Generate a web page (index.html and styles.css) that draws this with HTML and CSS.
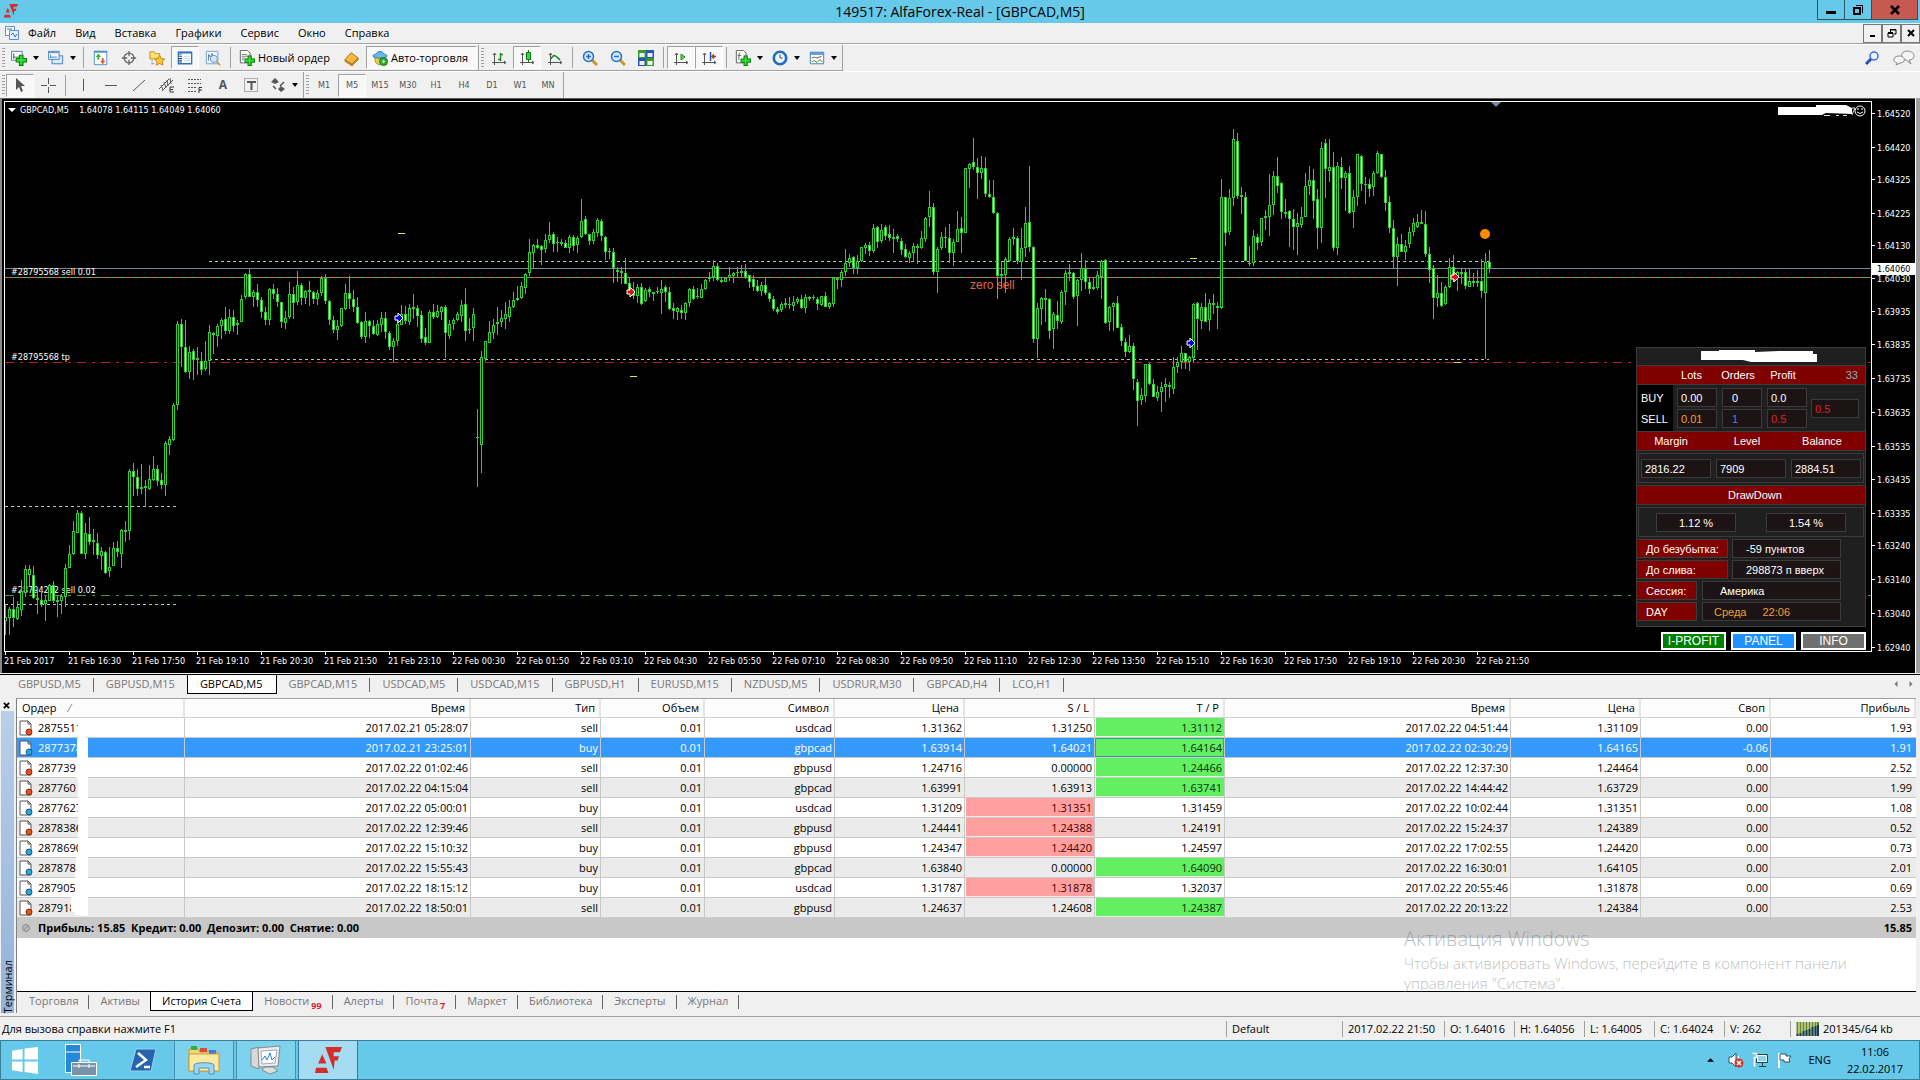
FILE: index.html
```
<!DOCTYPE html>
<html lang="ru">
<head>
    <meta charset="UTF-8">
    <meta name="viewport" content="width=device-width, initial-scale=1.0">
    <title>149517: AlfaForex-Real - [GBPCAD,M5]</title>
    <link rel="stylesheet" href="styles.css">
</head>
<body>
    <!-- Shared icons -->
    <svg class="defs" aria-hidden="true">
        <symbol id="logo" viewBox="0 0 26 26"><path fill="#d42d2a" d="M10 0h16l-2 5h-6v4h5l-1 4h-3l-1 9zM7 7l4 9H3zM1 20h10l2 5H0z"/></symbol>
        <symbol id="sheet" viewBox="0 0 14 16"><path d="M1 1h8l3 3v11H1z" fill="#fff" stroke="#555"/><path d="M9 1v3h3" fill="none" stroke="#555"/></symbol>
        <symbol id="order-sell" viewBox="0 0 14 16"><use href="#sheet"/><circle cx="10" cy="12" r="3" fill="#e4501c" stroke="#8e2c0c"/></symbol>
        <symbol id="order-buy" viewBox="0 0 14 16"><use href="#sheet"/><circle cx="10" cy="12" r="3" fill="#2ba3e0" stroke="#13608c"/></symbol>
        <symbol id="plus" viewBox="0 0 10 10"><path d="M3.500.5h3v3h3v3h-3v3h-3v-3h-3v-3h3z" fill="#2ee02e" stroke="#0a7a0a"/></symbol>
        <symbol id="axes" viewBox="0 0 16 16"><path d="M3.500 15V3M1 12.500h14M2 5l1.500-2L5 5M13 11l2 1.500-2 1.500" fill="none" stroke="#555"/></symbol>
        <symbol id="lens" viewBox="0 0 16 16"><path d="M10 10l5 5" stroke="#c79a2a" stroke-width="3"/><circle cx="6.500" cy="6.500" r="5" fill="#cfeaff" stroke="#2a6fc0" stroke-width="1.500"/></symbol>
    </svg>

    <header class="title-bar">
        <svg class="app-icon"><use href="#logo"/></svg>
        <h1>149517: AlfaForex-Real - [GBPCAD,M5]</h1>
        <div class="window-buttons">
            <button aria-label="Свернуть"><svg viewBox="0 0 12 12"><path d="M1 7h10v3H1z"/></svg></button>
            <button aria-label="Восстановить"><svg viewBox="0 0 12 12"><path d="M2 4h6v6H2z" fill="none" stroke="#000" stroke-width="2"/><path d="M4 1.500h6.500V9" fill="none" stroke="#000"/></svg></button>
            <button class="close" aria-label="Закрыть"><svg viewBox="0 0 12 12"><path d="M2 2l8 8M10 2l-8 8" stroke="#000" stroke-width="2.500"/></svg></button>
        </div>
    </header>

    <nav class="menu-bar">
        <svg class="menu-icon" viewBox="0 0 14 14"><path d="M.5.500h9v9h-9z" fill="#fff" stroke="#5b8ed0"/><path d="M4.500 4.500h9v9h-9z" fill="#e4efff" stroke="#5b8ed0"/><path d="M6 9l2-2 2 4 2-3M2 3h5" fill="none" stroke="#3a6fb8"/></svg>
        <a href="#">Файл</a>
        <a href="#">Вид</a>
        <a href="#">Вставка</a>
        <a href="#">Графики</a>
        <a href="#">Сервис</a>
        <a href="#">Окно</a>
        <a href="#">Справка</a>
        <div class="child-buttons">
            <button aria-label="Свернуть график"><svg viewBox="0 0 10 10"><path d="M2 7h5v2H2z"/></svg></button>
            <button aria-label="Восстановить график"><svg viewBox="0 0 10 10"><path d="M1 5h5v4H1zM3.500 4V1.500H9V6H7" fill="none" stroke="#000"/><path d="M1 4h5v2H1zM3 1h6v1.500H3z"/></svg></button>
            <button aria-label="Закрыть график"><svg viewBox="0 0 10 10"><path d="M2 2l6 6M8 2L2 8" stroke="#000" stroke-width="2"/></svg></button>
        </div>
    </nav>

    <div class="toolbar-row">
        <div class="toolbar">
            <i class="grip"></i>
            <button class="tool drop" aria-label="Новый график"><svg viewBox="0 0 18 18"><path d="M.5 1.500h12v10H.5z" fill="#fff" stroke="#3c78b4"/><path d="M3 4v6M2 8h8M3 4l1 1" stroke="#555" fill="none"/><use href="#plus" x="5" y="5" width="13" height="13"/></svg></button>
            <button class="tool drop" aria-label="Профили"><svg viewBox="0 0 18 18"><path d="M4.500 6.500h12v9h-12z" fill="#dbe9f8" stroke="#3c78b4"/><path d="M.5 1.500h12v9H.5z" fill="#f4f9ff" stroke="#3c78b4"/><path d="M1 3h11M3 5v4M2 8h8" stroke="#3c78b4"/></svg></button>
            <i class="sep"></i>
            <button class="tool" aria-label="Обзор рынка"><svg viewBox="0 0 18 18"><path d="M1.500 1.500h14v15h-14z" fill="#fff" stroke="#4a8ac8"/><path d="M1 2h15" stroke="#4a8ac8" stroke-width="2"/><path d="M3 8l3-4 3 4H7v3H5V8z" fill="#35b835"/><path d="M8 12l3 4 3-4h-2V9h-2v3z" fill="#e8592a"/></svg></button>
            <button class="tool" aria-label="Окно данных"><svg viewBox="0 0 18 18"><circle cx="9" cy="9" r="5.500" fill="none" stroke="#666" stroke-width="1.500"/><path d="M9 1v6M9 11v6M1 9h6M11 9h6" stroke="#666" stroke-width="1.500"/></svg></button>
            <button class="tool" aria-label="Навигатор"><svg viewBox="0 0 18 18"><path d="M1 2h5l1 2h5v6H1z" fill="#ffe06a" stroke="#b8902a"/><path d="M3.500 11v5M3 15.500h4" stroke="#666" stroke-dasharray="1 1"/><path d="M12 6l1.800 3.600 4 .6-2.900 2.800.7 4-3.600-1.900L8.400 17l.7-4-2.900-2.800 4-.6z" fill="#ffc830" stroke="#b8801a"/></svg></button>
            <button class="tool pressed" aria-label="Терминал"><svg viewBox="0 0 18 18"><path d="M1.500 2.500h15v13h-15z" fill="#fff" stroke="#2f74b8" stroke-width="1.500"/><path d="M2 3h14" stroke="#2f74b8" stroke-width="2"/><path d="M4 5v10" stroke="#234" stroke-width="3" stroke-dasharray="1 1"/><path d="M8 7h7M8 9.500h7M8 12h7" stroke="#b8d4ee"/></svg></button>
            <button class="tool" aria-label="Тестер стратегий"><svg viewBox="0 0 18 18"><path d="M1.500 1.500h13v14h-13z" fill="#edf5fd" stroke="#6a9cc8"/><path d="M4 12V5l2 3 2-4 2 5" fill="none" stroke="#55738c"/><circle cx="10" cy="10" r="4" fill="#cfe8ff" stroke="#5c8fc0"/><path d="M13 13l4 4" stroke="#d0a030" stroke-width="2"/></svg></button>
            <i class="sep"></i>
            <button class="tool text"><svg viewBox="0 0 18 18"><path d="M1.500.5h8l3 3v11h-11z" fill="#fff" stroke="#555"/><path d="M3 5h6M3 7h7M3 9h4M3 11h3" stroke="#777"/><use href="#plus" x="6" y="6" width="12" height="12"/></svg>Новый ордер</button>
            <button class="tool" aria-label="MetaEditor"><svg viewBox="0 0 18 18"><path d="M1 11l7-8 8 6-7 7z" fill="#f2bb3c" stroke="#9a6a12"/><path d="M1 11l8 5v2l-8-5zM9 16l7-7v2l-7 7z" fill="#c98a1c" stroke="#9a6a12" stroke-width=".5"/></svg></button>
            <button class="tool text pressed"><svg viewBox="0 0 18 18"><path d="M3 8h11l-1 6-5 3-4-3z" fill="#f0cb4a" stroke="#a8842a"/><path d="M1 7c0-2 3-2 4-3 1-3 7-3 8 0 1 1 4 1 4 3-4 3-12 3-16 0z" fill="#6bb5e8" stroke="#2d78ae"/><circle cx="13" cy="13" r="4.500" fill="#2fae2f" stroke="#147014"/><path d="M12 11v4l3-2z" fill="#fff"/></svg>Авто-торговля</button>
        </div>
        <div class="toolbar">
            <i class="grip"></i>
            <button class="tool" aria-label="Бары"><svg viewBox="0 0 16 16"><use href="#axes"/><path d="M9.500 3v8M9 4.500h3M7 9.500h3" stroke="#1f8a1f" stroke-width="1.500"/></svg></button>
            <button class="tool pressed" aria-label="Свечи"><svg viewBox="0 0 16 16"><use href="#axes"/><path d="M9.500 0v12" stroke="#0b7a0b"/><path d="M7.500 2.500h4v7h-4z" fill="#2fd84a" stroke="#0b7a0b"/></svg></button>
            <button class="tool" aria-label="Линия"><svg viewBox="0 0 16 16"><use href="#axes"/><path d="M4 9c3-6 5-3 9 1" fill="none" stroke="#1f8a1f" stroke-width="1.500"/></svg></button>
            <i class="sep"></i>
            <button class="tool" aria-label="Приблизить"><svg viewBox="0 0 16 16"><use href="#lens"/><path d="M4 6.500h5M6.500 4v5" stroke="#2a6fc0" stroke-width="1.500"/></svg></button>
            <button class="tool" aria-label="Отдалить"><svg viewBox="0 0 16 16"><use href="#lens"/><path d="M4 6.500h5" stroke="#2a6fc0" stroke-width="1.500"/></svg></button>
            <button class="tool" aria-label="Окна"><svg viewBox="0 0 16 16"><path d="M0 0h8v8H0zM8 8h8v8H8z" fill="#3f9a22"/><path d="M8 0h8v8H8zM0 8h8v8H0z" fill="#2456b8"/><path d="M1.500 3h5v4h-5zM9.500 3h5v4h-5zM1.500 11h5v4h-5zM9.500 11h5v4h-5z" fill="#e8f2ff"/></svg></button>
            <i class="sep"></i>
            <button class="tool pressed" aria-label="Автопрокрутка"><svg viewBox="0 0 16 16"><use href="#axes"/><path d="M8 4v6l4-3z" fill="#5fd85f" stroke="#1f8a1f"/></svg></button>
            <button class="tool pressed" aria-label="Сдвиг графика"><svg viewBox="0 0 16 16"><use href="#axes"/><path d="M9.500 2v9" stroke="#2456b8" stroke-width="1.500"/><path d="M15 6.500h-4M13 4.500l-2 2 2 2" fill="none" stroke="#a83a10" stroke-width="1.500"/></svg></button>
            <i class="sep"></i>
            <button class="tool drop" aria-label="Индикаторы"><svg viewBox="0 0 18 18"><path d="M1.500.5h8l3 3v11h-11z" fill="#fff" stroke="#555"/><path d="M6 3c-2 0-1 3-2 8M3 6h4" fill="none" stroke="#555"/><use href="#plus" x="6" y="6" width="12" height="12"/></svg></button>
            <button class="tool drop" aria-label="Периоды"><svg viewBox="0 0 18 18"><circle cx="9" cy="9" r="7" fill="#eef7ff" stroke="#1f6cc0" stroke-width="3"/><path d="M9 5v4h3" fill="none" stroke="#333"/></svg></button>
            <button class="tool drop" aria-label="Шаблоны"><svg viewBox="0 0 18 18"><path d="M1.500 2.500h15v13h-15z" fill="#fff" stroke="#2f74b8"/><path d="M1 4h16" stroke="#5a9ad8" stroke-width="3"/><path d="M3 9l3-1 3 1 5-2" fill="none" stroke="#a83a10"/><path d="M3 13l3-1 3 2 3-3 3 2" fill="none" stroke="#1f8a1f"/></svg></button>
        </div>
        <div class="toolbar-right">
            <button class="tool" aria-label="Поиск"><svg viewBox="0 0 16 16"><circle cx="10" cy="6" r="4" fill="#eef4ff" stroke="#3b6ad0" stroke-width="1.500"/><path d="M7 9l-5 5" stroke="#2450b8" stroke-width="3"/></svg></button>
            <button class="tool" aria-label="Сообщения"><svg class="wide" viewBox="0 0 22 16"><path d="M14 1c9 0 9 9 2 9l2 4-5-4C7 9 7 1 14 1z" fill="#f4f4f4" stroke="#888"/><path d="M6 6c7 0 7 7 1 7l-4 2 1-2C-1 12 0 6 6 6z" fill="#f8f8f8" stroke="#888"/></svg></button>
        </div>
    </div>

    <div class="toolbar-row second">
        <div class="toolbar">
            <i class="grip"></i>
            <button class="tool pressed" aria-label="Курсор"><svg viewBox="0 0 16 16"><path d="M4 1v12l3-3 2 5 2-1-2-5h4z" fill="#555"/></svg></button>
            <button class="tool" aria-label="Перекрестие"><svg viewBox="0 0 16 16"><path d="M8.500 1v6M8.500 10v6M1 8.500h6M10 8.500h6" stroke="#555"/></svg></button>
            <i class="sep"></i>
            <button class="tool" aria-label="Вертикальная линия"><svg viewBox="0 0 16 16"><path d="M8.500 2v12" stroke="#555"/></svg></button>
            <button class="tool" aria-label="Горизонтальная линия"><svg viewBox="0 0 16 16"><path d="M2 8.500h12" stroke="#555"/></svg></button>
            <button class="tool" aria-label="Трендовая линия"><svg viewBox="0 0 16 16"><path d="M2 14L14 3" stroke="#555"/></svg></button>
            <button class="tool" aria-label="Канал"><svg viewBox="0 0 16 16"><path d="M0 12L10 2M3 14L14 3M2 8l2 5M5 5l2 6M8 3l1 6M11 1l1 6" stroke="#555"/><path d="M15 10h-4v5h4M11 12.500h3" stroke="#333" fill="none"/></svg></button>
            <button class="tool" aria-label="Фибоначчи"><svg viewBox="0 0 16 16"><path d="M1 2.500h13M1 6.500h13M1 10.500h9M1 14.500h8" stroke="#555" stroke-dasharray="2 1"/><path d="M15 10.500h-3V16M12 13h3" stroke="#333" fill="none"/></svg></button>
            <button class="tool letter" aria-label="Текст">A</button>
            <button class="tool" aria-label="Метка"><svg viewBox="0 0 16 16"><path d="M1.500 1.500h13v13h-13z" fill="none" stroke="#666" stroke-dasharray="1 1"/><path d="M4 5h9M8.500 5v8" stroke="#555" stroke-width="2"/></svg></button>
            <button class="tool drop" aria-label="Стрелки"><svg viewBox="0 0 16 16"><path d="M5 1l4 4-4 2-4-2zM11 9l4 3-4 3-3-3z" fill="#555"/><path d="M3 9l3 3M14 5l-4 4" stroke="#555" stroke-width="1.500"/></svg></button>
        </div>
        <div class="toolbar periods">
            <i class="grip"></i>
            <button class="tool">M1</button>
            <button class="tool pressed">M5</button>
            <button class="tool">M15</button>
            <button class="tool">M30</button>
            <button class="tool">H1</button>
            <button class="tool">H4</button>
            <button class="tool">D1</button>
            <button class="tool">W1</button>
            <button class="tool">MN</button>
        </div>
    </div>

    <main class="chart-window">
        <div class="plot">
            <svg class="plot-canvas" id="plot"></svg>
            <svg class="expert-name" viewBox="0 0 88 16">
                <path d="M0 4h38V2h30l6 3v6l-26-1-4 2H0z" fill="#fff"/>
                <path d="M46 12.500h6M58 12.500h3M65 12.500h4M74 5h3l-3 7" fill="none" stroke="#ddd"/>
                <circle cx="82" cy="8" r="5" fill="#000" stroke="#fff"/>
                <path d="M80 5v2M84 5v2M79 9q3 3 6 0" fill="none" stroke="#fff"/>
            </svg>

            <section class="expert">
                <div class="info">
                    <div class="info-title"><svg viewBox="0 0 116 12"><path d="M0 1h18V0h36v2l24-1h34v3h4v8H50l-8-2H0z" fill="#fff"/></svg></div>
                    <div class="band orders-head"><span>Lots</span><span>Orders</span><span>Profit</span><span class="count">33</span></div>
                    <div class="orders">
                        <div class="sides"><span>BUY</span><span>SELL</span></div>
                        <div class="cells">
                            <span class="cell">0.00</span><span class="cell indent">0</span><span class="cell">0.0</span>
                            <span class="cell orange">0.01</span><span class="cell indent blue">1</span><span class="cell red">0.5</span>
                        </div>
                        <span class="cell total red">0.5</span>
                    </div>
                    <div class="band three"><span>Margin</span><span>Level</span><span>Balance</span></div>
                    <div class="frame funds"><span class="cell">2816.22</span><span class="cell">7909</span><span class="cell">2884.51</span></div>
                    <div class="band one"><span>DrawDown</span></div>
                    <div class="frame drawdown"><span class="cell">1.12 %</span><span class="cell">1.54 %</span></div>
                    <div class="facts">
                        <div class="fact wide"><span class="key">До безубытка:</span><span class="cell">-59 пунктов</span></div>
                        <div class="fact wide"><span class="key">До слива:</span><span class="cell">298873 п вверх</span></div>
                        <div class="fact"><span class="key">Сессия:</span><span class="cell">Америка</span></div>
                        <div class="fact day"><span class="key">DAY</span><span class="cell orange"><span>Среда</span><span>22:06</span></span></div>
                    </div>
                </div>
                <div class="expert-buttons">
                    <button class="green">I-PROFIT</button>
                    <button class="azure">PANEL</button>
                    <button class="gray">INFO</button>
                </div>
            </section>
        </div>
        <svg class="price-axis" id="prices"></svg>
        <div class="time-axis" id="times"></div>
    </main>

    <nav class="tabs chart-tabs">
        <a href="#">GBPUSD,M5</a>
        <a href="#">GBPUSD,M15</a>
        <a href="#" class="active">GBPCAD,M5</a>
        <a href="#">GBPCAD,M15</a>
        <a href="#">USDCAD,M5</a>
        <a href="#">USDCAD,M15</a>
        <a href="#">GBPUSD,H1</a>
        <a href="#">EURUSD,M15</a>
        <a href="#">NZDUSD,M5</a>
        <a href="#">USDRUR,M30</a>
        <a href="#">GBPCAD,H4</a>
        <a href="#">LCO,H1</a>
        <svg class="scroll-arrows" viewBox="0 0 24 8"><path d="M4 0v8L0 4zM20 0v8l4-4z" fill="#777"/></svg>
    </nav>

    <section class="terminal">
        <aside class="terminal-side">
            <button aria-label="Закрыть терминал"><svg viewBox="0 0 8 8"><path d="M1 1l6 6M7 1L1 7" stroke="#000" stroke-width="2"/></svg></button>
            <div class="terminal-name"><span>Терминал</span></div>
        </aside>
        <div class="terminal-body">
            <div class="history">
                <table>
                    <colgroup>
                        <col class="c-order"><col class="c-time"><col><col class="c-lot"><col><col><col><col><col class="c-time"><col><col><col class="c-profit">
                    </colgroup>
                    <thead>
                        <tr><th>Ордер <i>/</i></th><th>Время</th><th>Тип</th><th>Объем</th><th>Символ</th><th>Цена</th><th>S / L</th><th>T / P</th><th>Время</th><th>Цена</th><th>Своп</th><th>Прибыль</th></tr>
                    </thead>
                    <tbody>
                        <tr><td><svg><use href="#order-sell"/></svg>2875511</td><td>2017.02.21 05:28:07</td><td>sell</td><td>0.01</td><td>usdcad</td><td>1.31362</td><td>1.31250</td><td class="tp">1.31112</td><td>2017.02.22 04:51:44</td><td>1.31109</td><td>0.00</td><td>1.93</td></tr>
                        <tr class="selected"><td><svg><use href="#order-buy"/></svg>2877378</td><td>2017.02.21 23:25:01</td><td>buy</td><td>0.01</td><td>gbpcad</td><td>1.63914</td><td>1.64021</td><td class="tp">1.64164</td><td>2017.02.22 02:30:29</td><td>1.64165</td><td>-0.06</td><td>1.91</td></tr>
                        <tr><td><svg><use href="#order-sell"/></svg>2877390</td><td>2017.02.22 01:02:46</td><td>sell</td><td>0.01</td><td>gbpusd</td><td>1.24716</td><td>0.00000</td><td class="tp">1.24466</td><td>2017.02.22 12:37:30</td><td>1.24464</td><td>0.00</td><td>2.52</td></tr>
                        <tr><td><svg><use href="#order-sell"/></svg>287760</td><td>2017.02.22 04:15:04</td><td>sell</td><td>0.01</td><td>gbpcad</td><td>1.63991</td><td>1.63913</td><td class="tp">1.63741</td><td>2017.02.22 14:44:42</td><td>1.63729</td><td>0.00</td><td>1.99</td></tr>
                        <tr><td><svg><use href="#order-buy"/></svg>2877627</td><td>2017.02.22 05:00:01</td><td>buy</td><td>0.01</td><td>usdcad</td><td>1.31209</td><td class="sl">1.31351</td><td>1.31459</td><td>2017.02.22 10:02:44</td><td>1.31351</td><td>0.00</td><td>1.08</td></tr>
                        <tr><td><svg><use href="#order-sell"/></svg>2878386</td><td>2017.02.22 12:39:46</td><td>sell</td><td>0.01</td><td>gbpusd</td><td>1.24441</td><td class="sl">1.24388</td><td>1.24191</td><td>2017.02.22 15:24:37</td><td>1.24389</td><td>0.00</td><td>0.52</td></tr>
                        <tr><td><svg><use href="#order-buy"/></svg>2878690</td><td>2017.02.22 15:10:32</td><td>buy</td><td>0.01</td><td>gbpusd</td><td>1.24347</td><td class="sl">1.24420</td><td>1.24597</td><td>2017.02.22 17:02:55</td><td>1.24420</td><td>0.00</td><td>0.73</td></tr>
                        <tr><td><svg><use href="#order-buy"/></svg>287878</td><td>2017.02.22 15:55:43</td><td>buy</td><td>0.01</td><td>gbpcad</td><td>1.63840</td><td>0.00000</td><td class="tp">1.64090</td><td>2017.02.22 16:30:01</td><td>1.64105</td><td>0.00</td><td>2.01</td></tr>
                        <tr><td><svg><use href="#order-buy"/></svg>287905</td><td>2017.02.22 18:15:12</td><td>buy</td><td>0.01</td><td>usdcad</td><td>1.31787</td><td class="sl">1.31878</td><td>1.32037</td><td>2017.02.22 20:55:46</td><td>1.31878</td><td>0.00</td><td>0.69</td></tr>
                        <tr><td><svg><use href="#order-sell"/></svg>287918</td><td>2017.02.22 18:50:01</td><td>sell</td><td>0.01</td><td>gbpusd</td><td>1.24637</td><td>1.24608</td><td class="tp">1.24387</td><td>2017.02.22 20:13:22</td><td>1.24384</td><td>0.00</td><td>2.53</td></tr>
                    </tbody>
                    <tfoot>
                        <tr><td colspan="11"><svg viewBox="0 0 14 14"><circle cx="7" cy="7" r="3.500" fill="#bbb" stroke="#888"/><path d="M5 9l4-4" stroke="#888"/></svg>Прибыль: 15.85&nbsp; Кредит: 0.00&nbsp; Депозит: 0.00&nbsp; Снятие: 0.00</td><td>15.85</td></tr>
                    </tfoot>
                </table>
                <!-- white marker over the ends of the order numbers -->
                <svg class="marker" viewBox="0 0 18 198"><path d="M8 0h9v20h1v178l-13-1v-3H1v-18h4v-20h1v-18h2V60H6V40h1V20h1z" fill="#fff"/></svg>
                <div class="watermark">
                    <strong>Активация Windows</strong>
                    <p>Чтобы активировать Windows, перейдите в компонент панели управления "Система".</p>
                </div>
            </div>
            <nav class="tabs terminal-tabs">
                <a href="#">Торговля</a>
                <a href="#">Активы</a>
                <a href="#" class="active">История Счета</a>
                <a href="#">Новости<sub>99</sub></a>
                <a href="#">Алерты</a>
                <a href="#">Почта<sub>7</sub></a>
                <a href="#">Маркет</a>
                <a href="#">Библиотека</a>
                <a href="#">Эксперты</a>
                <a href="#">Журнал</a>
            </nav>
        </div>
    </section>

    <footer class="status-bar">
        <span class="hint">Для вызова справки нажмите F1</span>
        <span class="s-profile">Default</span>
        <span class="s-date">2017.02.22 21:50</span>
        <span class="s-price">O: 1.64016</span>
        <span class="s-price">H: 1.64056</span>
        <span class="s-price">L: 1.64005</span>
        <span class="s-price">C: 1.64024</span>
        <span class="s-volume">V: 262</span>
        <span class="s-traffic"><svg viewBox="0 0 23 14"><path d="M1.500 0v14M4.500 0v14M7.500 0v14M10.500 0v14M13.500 0v14M16.500 0v14M19.500 0v14M22 0v14" stroke="#6a8a1a" stroke-width="2"/><path d="M1.500 12v2M4.500 11v3M7.500 9v5M10.500 8v6M13.500 7v7M16.500 5v9M19.500 4v10M22 3v11" stroke="#12405c" stroke-width="2"/></svg>201345/64 kb</span>
    </footer>

    <div class="taskbar">
        <button class="start" aria-label="Пуск"><svg viewBox="0 0 28 28"><path d="M0 4l11-2v11H0zM13 1.600L27 0v13H13zM0 15h11v11L0 24zM13 15h14v13l-14-2z" fill="#fff"/></svg></button>
        <button aria-label="Диспетчер серверов"><svg viewBox="0 0 32 32"><path d="M.5.500h15v28H.5z" fill="#2489d8" stroke="#fff"/><path d="M1 8h14" stroke="#fff"/><path d="M6.500 18.500h25v13h-25z" fill="#7893a8" stroke="#fff"/><path d="M14 18v-2h10v2M8 22h22M14 20v4M24 20v4" fill="none" stroke="#fff"/></svg></button>
        <button aria-label="PowerShell"><svg viewBox="0 0 32 32"><path d="M9 5h20l-5 22H3z" fill="#2565ae" stroke="#9cd0ee"/><path d="M11 9l8 7-10 7M17 23h6" fill="none" stroke="#fff" stroke-width="2.500"/></svg></button>
        <button class="running" aria-label="Проводник"><svg viewBox="0 0 32 30"><path d="M1 4h9l2 3h18v19H1z" fill="#f2d778" stroke="#c49a3c"/><path d="M3 1h6v4H3z" fill="#3da83d"/><path d="M12 3h7v4h-7z" fill="#d84a3a"/><path d="M21 5h7v4h-7z" fill="#3a7ed8"/><path d="M1 9h30v17H1z" fill="#fae9a0" stroke="#c49a3c"/><path d="M6 29v-9c0-3 20-3 20 0v9h-5v-6H11v6z" fill="#9fd4f0" stroke="#4a96c4"/></svg></button>
        <button class="running" aria-label="Монитор"><svg viewBox="0 0 32 30"><path d="M1 4l8-2v22l-8-3z" fill="#d8d8d8" stroke="#888"/><path d="M8 3l22-2-2 20-19 1z" fill="#eee" stroke="#888"/><path d="M11 6l16-1-2 13-13 1z" fill="#fff" stroke="#9ab"/><path d="M12 15l3-4 2 4 3-7 2 7 3-3" fill="none" stroke="#2a80c8"/><path d="M15 22h8l5 4-8 3-8-4z" fill="#ddd" stroke="#888"/></svg></button>
        <button class="running current" aria-label="AlfaForex"><svg><use href="#logo"/></svg></button>
        <div class="tray">
            <svg class="up" viewBox="0 0 8 4"><path d="M0 4l4-4 4 4z"/></svg>
            <svg viewBox="0 0 16 16"><path d="M1 5h3l4-4v14l-4-4H1z" fill="#fff" stroke="#356"/><path d="M10 4q3 4 0 8" fill="none" stroke="#fff"/><circle cx="11" cy="11" r="4.500" fill="#d8312a"/><path d="M9 9l4 4M13 9l-4 4" stroke="#fff" stroke-width="1.500"/></svg>
            <svg viewBox="0 0 16 16"><path d="M4.500 2.500h11v8h-11zM7 14.500h7M10.500 11v3" fill="#8fd4ee" stroke="#245"/><path d="M5.500 3.500h9v6h-9z" fill="none" stroke="#fff"/><path d="M.5 1.500h4v4h-2v9" fill="none" stroke="#fff" stroke-width="1.500"/></svg>
            <svg viewBox="0 0 16 16"><path d="M3 1v15" stroke="#fff" stroke-width="2"/><path d="M4 2h6v2h5l-2 3 1 3H8V8H4z" fill="#fff" stroke="#356"/></svg>
            <span class="lang">ENG</span>
            <time>11:06<br>22.02.2017</time>
        </div>
    </div>

    <script src="chart.js"></script>
</body>
</html>
```
FILE: styles.css
```
/* Base */
* {
    box-sizing: border-box;
}

body {
    margin: 0;
    min-height: 100vh;
    display: flex;
    flex-direction: column;
    background: #f0f0f0;
    color: #000;
    font-family: "Open Sans", "Noto Sans", sans-serif;
    font-size: 11px;
    line-height: 16px;
}

button {
    margin: 0;
    padding: 0;
    border: 0;
    background: none;
    color: inherit;
    font: inherit;
}

a {
    color: inherit;
    text-decoration: none;
}

svg {
    display: block;
    flex: none;
}

.defs {
    position: absolute;
    width: 0;
    height: 0;
}

/* Title bar */
.title-bar {
    display: grid;
    grid-template-columns: 1fr auto 1fr;
    height: 23px;
    background: #66c9e9;
}

.app-icon {
    width: 14px;
    height: 14px;
    margin: 4px;
}

.title-bar h1 {
    margin: 0;
    font-size: 14px;
    font-weight: 400;
    line-height: 23px;
}

.window-buttons {
    display: flex;
    justify-self: end;
    height: 20px;
    margin-right: 2px;
    border: 1px solid #2a5565;
    border-top: 0;
}

.window-buttons button {
    display: flex;
    align-items: center;
    justify-content: center;
    width: 27px;
    border-right: 1px solid #2a5565;
}

.window-buttons .close {
    width: 45px;
    border: 0;
    background: #c75a50;
}

.window-buttons svg {
    width: 12px;
    height: 12px;
}

/* Menu */
.menu-bar {
    display: flex;
    align-items: center;
    gap: 19px;
    height: 21px;
    padding-left: 5px;
    border-bottom: 1px solid #a0a0a0;
}

.menu-icon {
    width: 14px;
    height: 14px;
    margin-right: -10px;
}

.child-buttons {
    display: flex;
    margin-left: auto;
}

.child-buttons button {
    display: flex;
    align-items: center;
    justify-content: center;
    width: 19px;
    height: 19px;
    border: 1px solid #777;
}

.child-buttons svg {
    width: 10px;
    height: 10px;
}

/* Toolbars */
.toolbar-row {
    display: flex;
    height: 27px;
    border-top: 1px solid #fff;
}

.toolbar {
    display: flex;
    align-items: center;
    padding: 0 1px 0 2px;
    border-right: 1px solid #a0a0a0;
    border-bottom: 1px solid #a0a0a0;
}

.grip {
    width: 3px;
    height: 20px;
    margin-right: 1px;
    background: repeating-linear-gradient(#a0a0a0 0 1px, #f0f0f0 1px 3px);
}

.sep {
    width: 1px;
    height: 21px;
    margin: 0 3px;
    background: #a0a0a0;
}

.tool {
    display: flex;
    align-items: center;
    justify-content: center;
    width: 28px;
    height: 23px;
    color: #555;
}

.tool svg {
    width: 16px;
    height: 16px;
}

.tool .wide {
    width: 22px;
}

.tool.drop {
    width: 37px;
    gap: 6px;
}

.tool.drop::after {
    content: "";
    border: 3px solid transparent;
    border-top: 4px solid #000;
    border-bottom: 0;
}

.tool.text {
    width: auto;
    padding: 0 8px 0 5px;
    gap: 3px;
    color: #000;
}

.tool.pressed {
    border: 1px solid;
    border-color: #a0a0a0 #fff #fff #a0a0a0;
    background: #f8f8f8;
}

.tool.letter {
    font-weight: 700;
    font-size: 12px;
}

.toolbar-right {
    display: flex;
    align-items: center;
    gap: 4px;
    margin-left: auto;
    padding-right: 2px;
}

.second .toolbar {
    border-bottom: 0;
}

.periods {
    font-family: "DejaVu Sans Condensed", "DejaVu Sans", sans-serif;
    font-size: 9px;
}

/* Chart */
.chart-window {
    display: grid;
    grid-template-columns: 1fr 43px;
    grid-template-rows: 551px 21px;
    padding: 2px 0 0 2px;
    margin-right: 5px;
    border-top: 1px solid #606060;
    border-left: 2px solid #888;
    background: #000;
    color: #fff;
    font-family: "DejaVu Sans Condensed", "DejaVu Sans", sans-serif;
    font-size: 9px;
    box-shadow: 1px 0 #fff, 5px 0 #a0a0a0;
}

.plot {
    position: relative;
    overflow: hidden;
    border: 1px solid #fff;
}

.plot-canvas,
.price-axis {
    width: 100%;
    height: 100%;
    overflow: visible;
    shape-rendering: crispEdges;
}

.plot-canvas text,
.price-axis text {
    fill: #fff;
    dominant-baseline: central;
}

.plot-canvas .zero {
    fill: #e06848;
    font-family: "Liberation Sans", Arial, sans-serif;
    font-size: 12px;
}

.price-axis .bid {
    fill: #000;
}

.plot-canvas .smooth {
    shape-rendering: auto;
}

.time-axis {
    grid-column: 1 / -1;
    display: flex;
    overflow: hidden;
}

.time-axis span {
    position: relative;
    flex: none;
    width: 64px;
    padding-top: 1px;
    line-height: 16px;
    white-space: nowrap;
}

.time-axis span::before {
    content: "";
    position: absolute;
    top: 0;
    left: 1px;
    width: 1px;
    height: 3px;
    background: #fff;
}

.expert-name {
    position: absolute;
    top: 1px;
    right: 5px;
    width: 88px;
    height: 16px;
}

/* Expert panel over the chart */
.expert {
    position: absolute;
    right: 5px;
    bottom: 1px;
    width: 230px;
    font-family: "Liberation Sans", Arial, sans-serif;
    font-size: 11px;
}

.info {
    border: 1px solid #3c3c3c;
    padding-bottom: 5px;
    background: #1f1f1f;
}

.info-title {
    display: flex;
    justify-content: center;
    height: 17px;
    padding: 2px 0 0 16px;
}

.info-title svg {
    width: 116px;
    height: 12px;
}

.band {
    display: grid;
    align-items: center;
    height: 20px;
    border-top: 1px solid #3c3c3c;
    border-bottom: 1px solid #3c3c3c;
    background: #800000;
    text-align: center;
}

.orders-head {
    grid-template-columns: 45px 48px 42px 1fr;
    padding-left: 32px;
}

.orders-head .count {
    padding-right: 7px;
    color: #7fb8b8;
    text-align: right;
}

.three {
    grid-template-columns: 68px 84px 66px;
}

.orders {
    display: grid;
    grid-template-columns: 35px 130px 48px;
    column-gap: 4px;
    height: 46px;
    padding-left: 1px;
}

.sides {
    display: grid;
    padding: 2px 0 2px 3px;
    align-items: center;
    background: #000;
}

.cells {
    display: grid;
    grid-template-columns: repeat(3, 40px);
    column-gap: 5px;
    row-gap: 2px;
    align-content: center;
}

.cell {
    height: 19px;
    padding-left: 3px;
    border: 1px solid #3c3c3c;
    background: #1c1414;
    line-height: 18px;
}

.cell.indent {
    padding-left: 9px;
}

.total {
    align-self: center;
}

.orange {
    color: #f0a030;
}

.blue {
    color: #3a8ae0;
}

.red {
    color: #e02020;
}

.frame {
    display: flex;
    align-items: center;
    justify-content: space-between;
    height: 30px;
    margin: 2px 1px;
    border: 1px solid #3c3c3c;
}

.funds {
    padding: 0 2px;
}

.funds .cell {
    width: 70px;
}

.drawdown {
    padding: 0 17px;
}

.drawdown .cell {
    width: 80px;
    padding: 0;
    text-align: center;
}

.band.one {
    padding-left: 8px;
}

.facts {
    display: grid;
    row-gap: 2px;
    padding-right: 24px;
}

.fact {
    display: grid;
    grid-template-columns: 60px 1fr;
    column-gap: 5px;
}

.fact.wide {
    grid-template-columns: 91px 1fr;
    column-gap: 4px;
}

.key {
    height: 19px;
    padding-left: 9px;
    border: 1px solid #3c3c3c;
    border-left: 0;
    background: #800000;
    line-height: 18px;
}

.fact .cell {
    padding-left: 17px;
}

.fact.wide .cell {
    padding-left: 13px;
}

.fact.day .cell {
    display: flex;
    gap: 16px;
    padding-left: 11px;
}

.expert-buttons {
    display: flex;
    justify-content: flex-end;
    gap: 5px;
    margin-top: 5px;
}

.expert-buttons button {
    width: 65px;
    height: 18px;
    border: 2px solid;
    font-size: 12px;
    line-height: 14px;
}

.green {
    border-color: #1a8a1a #0a6a0a #0a6a0a #1a8a1a;
    background: #008000;
}

.azure {
    border-color: #5ab0ff #1e90ff #1e90ff #5ab0ff;
    background: #1e90ff;
}

.gray {
    border-color: #606060 #a8a8a8 #a8a8a8 #606060;
    background: #707070;
}

/* Tab strips */
.tabs {
    display: flex;
    height: 21px;
    border-top: 1px solid #000;
    color: #777;
    line-height: 18px;
}

.tabs a {
    padding: 0 11px;
    background: linear-gradient(#666, #666) right 3px / 1px 14px no-repeat;
}

.tabs .active {
    height: 19px;
    margin-left: -1px;
    border: 1px solid #000;
    border-top: 0;
    background: #fff;
    color: #000;
}

.tabs sub {
    margin-left: 2px;
    color: #e02030;
    font-size: 9px;
    font-weight: 700;
    line-height: 9px;
    vertical-align: -4px;
}

.chart-tabs {
    margin-top: 1px;
    padding-left: 6px;
}

.chart-tabs a {
    padding: 0 13px 0 12px;
}

.terminal-tabs {
    height: 22px;
    padding-left: 1px;
}

.scroll-arrows {
    width: 19px;
    height: 6px;
    margin: 6px 7px 0 auto;
}

/* Terminal */
.terminal {
    display: flex;
    flex: 1;
    margin-top: 3px;
}

.terminal-side {
    display: flex;
    flex-direction: column;
    width: 16px;
    padding-left: 1px;
}

.terminal-side button {
    height: 13px;
    padding: 2px 3px 0 2px;
}

.terminal-side button svg {
    width: 7px;
    height: 7px;
}

.terminal-name {
    display: flex;
    flex: 1;
    align-items: flex-end;
    width: 13px;
    background: linear-gradient(#b9cfea, #92b2d8);
}

.terminal-name span {
    writing-mode: vertical-rl;
    transform: rotate(180deg);
    line-height: 13px;
}

.terminal-body {
    display: flex;
    flex: 1;
    flex-direction: column;
    margin-right: 4px;
    border-top: 1px solid #a0a0a0;
    border-left: 1px solid #808080;
}

.history {
    position: relative;
    flex: 1;
    background: #fff;
}

.history table {
    width: 100%;
    table-layout: fixed;
    border-collapse: separate;
    border-spacing: 0;
}

.history col {
    width: 130px;
}

.history .c-order {
    width: 168px;
}

.history .c-time {
    width: 286px;
}

.history .c-lot {
    width: 104px;
}

.history .c-profit {
    width: auto;
}

.history th {
    height: 19px;
    padding: 0 4px 0 5px;
    border-right: 2px solid #e4e4e4;
    border-bottom: 1px solid #d0d0d0;
    background: #fcfcfc;
    font-weight: 400;
    text-align: right;
}

.history th:first-child,
.history td:first-child {
    text-align: left;
}

.history th i {
    margin-left: 8px;
    color: #888;
}

.history td {
    height: 20px;
    padding: 0 2px;
    border-right: 1px solid #c8c8c8;
    border-bottom: 1px solid #c8c8c8;
    line-height: 18px;
    text-align: right;
}

.history td:last-child {
    padding-right: 4px;
    border-right: 0;
}

.history td svg {
    display: inline-block;
    width: 14px;
    height: 16px;
    margin: 1px 5px 0 0;
    vertical-align: top;
}

.history tbody tr:nth-child(even) {
    background: #ebebeb;
}

.history tbody tr.selected {
    background: #3399ff;
    color: #fff;
}

.history .tp,
.history .selected .tp {
    background: #62f062;
    color: #033003;
    box-shadow: inset 0 -1px #d8ffd8, inset 1px 0 #f4fff4;
}

.history .selected .tp {
    box-shadow: inset 0 0 0 1px #2f9f9f;
}

.history .sl {
    background: #ff9f9f;
    color: #400;
    box-shadow: inset 0 -1px #ffe4e4, inset 1px 0 #fff4f4;
}

.history tfoot td {
    border: 0;
    background: #c8c8c8;
    font-weight: 700;
}

/* Drawn over the table */
.marker {
    position: absolute;
    top: 19px;
    left: 53px;
    width: 18px;
    height: 198px;
}

.watermark {
    position: absolute;
    top: 226px;
    right: 54px;
    width: 458px;
    color: rgba(120, 120, 120, 0.5);
    font-size: 15px;
    font-weight: 300;
    line-height: 20px;
}

.watermark strong {
    display: block;
    font-size: 20px;
    font-weight: 300;
    line-height: 28px;
}

.watermark p {
    margin: 0;
}

/* Status bar */
.status-bar {
    display: flex;
    align-items: center;
    height: 24px;
    margin-top: 3px;
    border-top: 1px solid #a0a0a0;
    white-space: nowrap;
}

.status-bar span {
    padding-left: 5px;
    border-left: 1px solid #a0a0a0;
}

.status-bar .hint {
    flex: 1;
    padding-left: 2px;
    border: 0;
}

.s-profile {
    width: 116px;
}

.s-date {
    width: 102px;
}

.s-price {
    width: 70px;
}

.s-volume {
    width: 66px;
}

.s-traffic {
    display: flex;
    align-items: center;
    gap: 4px;
    width: 130px;
}

.s-traffic svg {
    width: 23px;
    height: 14px;
}

/* Taskbar */
.taskbar {
    display: flex;
    height: 40px;
    border: 1px solid #3a7f99;
    background: #66c9e9;
}

.taskbar button {
    display: flex;
    align-items: center;
    justify-content: center;
    width: 62px;
}

.taskbar button svg {
    width: 32px;
    height: 32px;
}

.taskbar .start {
    width: 49px;
}

.taskbar .start svg,
.taskbar .current svg {
    width: 27px;
    height: 27px;
}

.taskbar .running {
    width: 60px;
    margin-right: 2px;
    border: 1px solid #3f93b0;
    border-width: 0 1px;
    background: #7ed2ee;
}

.taskbar .current {
    border-color: #2f7f9c;
    background: #a5dcf2;
}

.tray {
    display: flex;
    align-items: center;
    gap: 8px;
    margin-left: auto;
    padding-right: 16px;
}

.tray svg {
    width: 16px;
    height: 16px;
}

.tray .up {
    width: 7px;
    height: 4px;
    margin-right: 6px;
}

.lang {
    margin: 0 8px;
}

.tray time {
    line-height: 17px;
    text-align: center;
}
```
FILE: chart.js
```
// Bars are [high, low, open, close] in pixels from the top of the plot, one every 4px
const STEP = 4;
const bars = [
    [503,533,519,515],[505,533,516,507],[495,525,507,516],[499,518,517,505],[478,514,508,489],[463,495,491,467],
    [463,484,473,467],[464,497,473,496],[486,512,496,498],[489,505,498,503],[494,519,502,498],[482,499,499,483],
    [479,501,483,499],[493,515,498,500],[492,512,499,494],[462,505,495,466],[443,466,466,452],[419,453,452,429],
    [408,431,431,411],[409,452,411,452],[421,457,452,431],[415,443,432,440],[427,453,438,440],[431,457,441,453],
    [445,468,454,449],[449,472,450,471],[445,475,469,465],[440,464,464,446],[439,455,446,450],[427,466,452,428],
    [419,440,428,430],[367,438,429,369],[361,394,369,375],[367,394,375,387],[362,392,385,387],[378,405,386,384],
    [363,388,387,377],[354,379,378,367],[363,384,367,379],[371,387,378,383],[339,394,383,341],[334,353,343,337],
    [301,339,338,303],[219,308,303,222],[217,265,222,245],[218,271,245,270],[244,277,270,250],[247,278,249,258],
    [245,273,258,256],[250,273,259,268],[239,269,267,259],[223,273,259,230],[230,252,231,233],[222,245,234,224],
    [216,237,224,218],[205,232,217,229],[207,232,229,215],[208,230,215,224],[218,233,223,221],[193,220,220,197],
    [171,197,195,172],[166,195,172,195],[188,205,195,190],[182,205,190,198],[195,216,198,210],[205,223,210,218],
    [186,223,218,187],[182,197,187,192],[186,205,192,200],[200,226,200,220],[209,227,221,216],[180,217,215,192],
    [185,217,192,201],[169,203,200,183],[181,203,183,196],[188,202,196,189],[179,204,188,190],[189,202,190,197],
    [188,203,197,191],[174,194,191,176],[172,202,176,199],[198,223,199,218],[214,231,218,228],[218,238,228,224],
    [206,225,224,206],[182,208,207,191],[174,207,191,197],[188,210,197,205],[195,222,205,221],[219,237,220,235],
    [210,241,235,219],[218,236,219,224],[218,233,224,232],[218,234,233,222],[210,230,223,216],[210,237,216,230],
    [229,248,231,245],[236,260,245,239],[218,244,239,222],[203,223,223,212],[204,222,212,219],[202,223,220,206],
    [192,217,205,207],[203,225,206,214],[209,241,213,237],[226,243,235,241],[208,241,241,210],[202,217,210,215],
    [203,216,215,209],[204,218,210,205],[203,256,205,231],[218,237,234,222],[216,228,222,218],[210,219,218,212],
    [198,220,214,203],[186,239,202,229],[216,232,227,228],[206,239,226,212],[307,385,335,336],[249,371,343,255],
    [239,259,257,239],[219,241,241,230],[217,237,231,223],[205,233,222,220],[208,225,220,216],[200,227,217,212],
    [198,220,215,205],[190,206,205,198],[184,199,198,196],[180,197,196,184],[171,192,186,172],[137,174,171,150],
    [142,167,151,143],[137,147,143,146],[143,163,144,148],[132,151,147,138],[120,141,138,133],[130,150,132,142],
    [135,150,141,140],[137,144,140,142],[138,146,141,146],[133,151,146,135],[133,149,135,144],[134,151,143,136],
    [97,136,135,119],[114,133,117,132],[132,143,132,139],[127,142,139,130],[116,135,131,118],[117,139,119,134],
    [134,158,135,150],[146,157,149,150],[146,181,150,166],[165,180,168,170],[165,182,169,171],[156,182,171,182],
    [175,190,181,188],[180,197,188,194],[182,201,194,185],[181,203,185,202],[186,200,199,188],[185,195,187,190],
    [190,199,190,192],[185,192,190,189],[178,212,191,187],[183,200,185,190],[185,208,190,207],[201,217,206,209],
    [205,218,210,206],[203,217,208,211],[200,218,211,201],[186,205,201,187],[184,198,187,197],[186,197,195,194],
    [182,196,196,187],[177,188,187,178],[170,180,177,175],[158,179,175,164],[161,179,164,178],[175,181,178,180],
    [175,180,180,176],[165,179,176,173],[170,181,174,171],[165,176,171,170],[163,175,169,171],[162,177,169,175],
    [173,186,173,180],[173,189,177,185],[178,190,184,189],[180,194,189,183],[176,193,183,191],[190,200,191,197],
    [194,209,197,207],[205,212,207,210],[200,210,208,202],[196,206,203,201],[195,207,203,202],[194,209,204,200],
    [195,202,200,197],[193,207,197,206],[192,211,206,195],[194,199,195,197],[193,198,196,195],[195,208,197,202],
    [194,204,203,194],[190,205,194,205],[200,207,205,201],[175,205,202,176],[175,187,176,178],[168,185,178,170],
    [147,174,170,161],[152,165,161,156],[154,172,155,166],[153,172,166,159],[145,160,159,145],[141,152,146,143],
    [140,154,143,149],[122,151,149,126],[124,146,125,140],[122,141,139,128],[123,138,125,134],[123,139,132,136],
    [127,151,135,137],[132,140,134,137],[136,153,139,148],[142,156,147,155],[149,161,156,151],[141,160,151,144],
    [142,162,144,146],[129,147,146,136],[115,140,137,116],[89,125,115,105],[101,173,105,170],[145,191,170,147],
    [130,148,146,135],[125,146,135,136],[122,161,136,151],[137,164,151,140],[109,140,140,127],[115,151,126,131],
    [66,131,131,66],[61,86,67,62],[36,68,60,65],[56,97,65,71],[54,77,71,66],[55,95,66,92],
    [78,96,92,95],[78,112,95,111],[110,197,111,174],[159,186,172,174],[155,191,173,157],[135,160,159,137],
    [126,143,135,137],[134,162,136,159],[126,178,160,146],[105,155,146,121],[64,150,120,145],[144,241,145,237],
    [201,256,237,206],[195,223,207,196],[187,220,196,198],[196,237,197,229],[210,247,227,212],[199,227,213,219],
    [188,222,220,190],[168,203,190,171],[162,179,170,172],[170,197,171,195],[177,224,194,178],[151,189,178,166],
    [158,187,166,180],[175,192,180,187],[175,188,185,187],[169,188,186,173],[158,197,175,159],[157,222,158,221],
    [204,229,220,205],[200,229,205,201],[194,226,201,226],[222,244,225,239],[236,255,240,250],[233,251,250,244],
    [241,288,244,277],[277,324,280,299],[286,303,298,293],[262,300,294,262],[261,283,262,282],[277,295,282,295],
    [284,299,296,290],[280,310,290,285],[276,300,285,282],[280,296,283,285],[255,292,287,265],[255,271,265,260],
    [244,267,260,251],[251,267,251,260],[254,269,260,255],[201,261,256,202],[200,248,201,217],[201,227,219,205],
    [191,220,205,220],[197,229,218,201],[192,212,201,203],[200,227,204,206],[77,207,206,95],[95,144,95,131],
    [87,133,130,96],[27,104,96,37],[31,97,39,94],[85,112,93,95],[90,159,95,159],[144,164,161,162],
    [128,164,161,134],[132,148,135,141],[116,144,140,116],[108,128,114,116],[72,134,115,103],[69,113,103,74],
    [55,91,74,84],[80,117,81,110],[97,116,110,112],[108,145,109,117],[107,148,117,125],[111,153,125,121],
    [105,126,123,115],[71,115,115,84],[64,93,84,78],[67,117,78,99],[87,147,97,126],[40,141,126,46],
    [37,96,41,67],[37,80,69,65],[50,149,65,146],[60,153,146,64],[55,87,65,76],[69,109,76,71],
    [64,112,71,111],[88,126,110,95],[52,104,95,52],[53,89,54,82],[75,102,82,83],[77,95,82,87],
    [69,94,85,71],[49,72,71,51],[52,76,52,75],[68,109,75,101],[94,131,100,126],[118,166,126,155],
    [135,184,155,142],[132,150,142,150],[138,158,150,144],[125,146,142,130],[116,134,130,121],[112,126,125,120],
    [108,122,120,122],[109,155,122,152],[145,181,152,168],[163,217,166,196],[173,205,196,191],[180,205,191,204],
    [183,203,202,185],[156,186,185,165],[153,180,165,175],[169,189,176,170],[166,182,170,172],[167,187,170,184],
    [167,185,185,179],[171,185,179,181],[168,185,181,179],[157,196,179,189],[151,257,191,160],[148,171,160,166]
];

const times = [
    "21 Feb 2017", "21 Feb 16:30", "21 Feb 17:50", "21 Feb 19:10", "21 Feb 20:30", "21 Feb 21:50",
    "21 Feb 23:10", "22 Feb 00:30", "22 Feb 01:50", "22 Feb 03:10", "22 Feb 04:30", "22 Feb 05:50",
    "22 Feb 07:10", "22 Feb 08:30", "22 Feb 09:50", "22 Feb 11:10", "22 Feb 12:30", "22 Feb 13:50",
    "22 Feb 15:10", "22 Feb 16:30", "22 Feb 17:50", "22 Feb 19:10", "22 Feb 20:30", "22 Feb 21:50"
];

const prices = [
    "1.64520", "1.64420", "1.64325", "1.64225", "1.64130", "1.64030", "1.63935", "1.63835", "1.63735",
    "1.63635", "1.63535", "1.63435", "1.63335", "1.63240", "1.63140", "1.63040", "1.62940"
];

// Function to turn a price into a height on the axis
function priceY(price) {
    return Math.round(12 + (1.6452 - price) * 33766);
}

// Function to draw a horizontal line, up to the right edge when x2 is "100%"
function level(y, color, dash, x1 = 0, x2 = "100%") {
    return `<line x1="${x1}" x2="${x2}" y1="${y}.5" y2="${y}.5" stroke="${color}" stroke-dasharray="${dash}"/>`;
}

function arrow(x, y, color) {
    return `<path d="M${x - 3} ${y - 2}h3v-3l5 5-5 5v-3h-3z" fill="${color}" stroke="#fff"/>`;
}

function drawBars() {
    let wicks = "", bodies = "", hollow = "", filled = "";
    bars.forEach(([high, low, open, close], i) => {
        const x = i * STEP;
        const top = Math.min(open, close);
        const height = Math.max(1, Math.abs(open - close));
        wicks += `M${x} ${high}h1V${low}h-1z`;
        bodies += `M${x - 1} ${top}h3v${height}h-3z`;
        if (height > 2) {
            const inner = `M${x} ${top + 1}h1v${height - 2}h-1z`;
            if (close > open) filled += inner;
            else hollow += inner;
        }
    });
    return `<path d="${wicks}${bodies}" fill="#32cd32"/>
        <path d="${hollow}" fill="#000"/><path d="${filled}" fill="#d0ffd0"/>`;
}

document.getElementById("plot").innerHTML = [
    level(166, "#778899", "none"),
    level(175, "#5cae5c", "none"),
    level(175, "#d0604c", "9 6 3 6"),
    level(260, "#c02020", "9 6 3 6"),
    level(493, "#3c9a3c", "9 6 3 6"),
    level(159, "#a8c8dc", "3 3", 204, 1484),
    level(257, "#a8c8dc", "3 3", 204, 1484),
    level(404, "#a8c8dc", "3 3", 0, 171),
    level(502, "#a8c8dc", "3 3", 0, 171),
    `<text x="6" y="170">#28795568 sell 0.01</text>`,
    `<text x="6" y="255">#28795568 tp</text>`,
    `<text x="6" y="488">#28794212 sell 0.02</text>`,
    `<text class="zero" x="965" y="183">zero sell</text>`,
    drawBars(),
    level(131, "#e8e040", "none", 393, 400),
    level(274, "#e8e040", "none", 625, 632),
    level(156, "#e8e040", "none", 1185, 1192),
    level(260, "#e8e040", "none", 1449, 1456),
    `<g class="smooth">`,
    arrow(393, 216, "#0000e0"),
    arrow(625, 190, "#e01010"),
    arrow(1185, 241, "#0000e0"),
    arrow(1449, 175, "#e01010"),
    `<circle cx="1480" cy="132" r="5" fill="#ff8c00"/>`,
    `<path d="M1486 0h10l-5 5z" fill="#778899"/>`,
    `<path d="M3 6h8l-4 4z" fill="#fff"/></g>`,
    `<text x="15" y="8">GBPCAD,M5&#160;&#160;&#160; 1.64078 1.64115 1.64049 1.64060</text>`
].join("");

document.getElementById("prices").innerHTML = prices.map(price => {
    const y = priceY(price);
    return `<path d="M0 ${y}h3v1h-3z" fill="#fff"/><text x="5" y="${y + 1}">${price}</text>`;
}).join("") + `<rect y="162" width="43" height="12" fill="#fff"/><text class="bid" x="5" y="168">1.64060</text>`;

document.getElementById("times").innerHTML = times.map(time => `<span>${time}</span>`).join("");
```
